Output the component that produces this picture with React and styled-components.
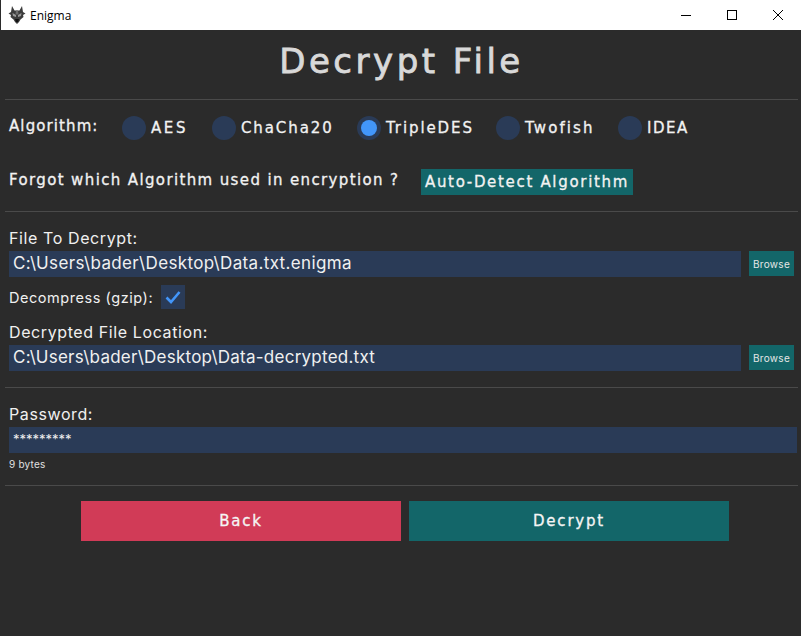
import React from 'react';
import styled, { createGlobalStyle } from 'styled-components';

const techFont = `"DejaVu Sans", sans-serif`;
const bodyFont = `Inter, "Open Sans", sans-serif`;

const GlobalStyle = createGlobalStyle`
html, body {
    margin: 0;
    padding: 0;
    background: #2b2b2b;
}
* {
    box-sizing: border-box;
}
`

const Window = styled.div`
width: 801px;
height: 636px;
overflow: hidden;
background: #2b2b2b;
padding-left: 1px;
`

const TitleBar = styled.div`
display: flex;
align-items: center;
height: 30px;
background: #fff;
`

const AppLogo = styled.svg`
width: 18px;
height: 18px;
margin-left: 7px;
`

const AppName = styled.span`
margin-left: 4px;
font-family: "Open Sans", sans-serif;
font-size: 12px;
color: #000;
flex: 1;
`

const WinButton = styled.div`
display: flex;
align-items: center;
justify-content: center;
width: 46px;
height: 30px;
svg {
    display: block;
}
`

const Content = styled.div`
padding: 0 3px 0 4px;
`

const Title = styled.h1`
display: flex;
align-items: center;
justify-content: center;
height: 69px;
margin: 0;
padding-bottom: 7px;
font-family: ${techFont};
font-size: 34px;
font-weight: 400;
letter-spacing: 3.5px;
-webkit-text-stroke: .8px #d9d9d9;
color: #d9d9d9;
`

const Divider = styled.div`
height: 1px;
background: #4a4a4a;
`

const Section = styled.div`
padding: ${p => p.$top}px 0 0 4px;
height: ${p => p.$height}px;
`

const AlgoRow = styled.div`
display: flex;
align-items: center;
height: 24px;
`

const AlgoLabel = styled.span`
width: 113px;
margin-top: -4px;
font-family: ${techFont};
font-size: 15px;
letter-spacing: 1.1px;
-webkit-text-stroke: .3px #f2f2f2;
color: #f2f2f2;
`

const RadioItem = styled.label`
display: flex;
align-items: center;
gap: 5px;
width: ${p => p.$width}px;
`

const RadioDot = styled.span`
display: flex;
align-items: center;
justify-content: center;
width: 24px;
height: 24px;
border-radius: 50%;
background: #2a3b57;
&::after {
    content: '';
    display: ${p => (p.$checked ? 'block' : 'none')};
    width: 16px;
    height: 16px;
    border-radius: 50%;
    background: #4296fa;
}
`

const RadioText = styled.span`
font-family: ${techFont};
font-size: 15px;
letter-spacing: ${p => p.$spacing}px;
-webkit-text-stroke: .3px #f2f2f2;
color: #f2f2f2;
`

const ForgotRow = styled.div`
display: flex;
align-items: flex-start;
margin-top: 29px;
`

const ForgotText = styled.span`
width: 412px;
margin-top: 2px;
font-family: ${techFont};
font-size: 15px;
letter-spacing: 1.37px;
-webkit-text-stroke: .3px #f2f2f2;
color: #f2f2f2;
white-space: nowrap;
`

const DetectButton = styled.div`
display: flex;
align-items: center;
justify-content: center;
width: 212px;
height: 26px;
background: #136669;
font-family: ${techFont};
font-size: 15px;
letter-spacing: 1.68px;
-webkit-text-stroke: .3px #f2f2f2;
color: #f2f2f2;
white-space: nowrap;
`

const FieldLabel = styled.div`
height: 20px;
font-family: ${bodyFont};
font-size: 16px;
line-height: 20px;
letter-spacing: .6px;
color: #f0f0f0;
`

const FieldRow = styled.div`
display: flex;
align-items: flex-start;
gap: 8px;
margin-top: ${p => p.$top || 0}px;
`

const PathInput = styled.div`
flex: ${p => (p.$full ? 'none' : 1)};
width: ${p => (p.$full ? '788px' : 'auto')};
height: 26px;
padding-left: 4px;
background: #2a3b57;
font-family: ${bodyFont};
font-size: 17px;
line-height: 25px;
letter-spacing: ${p => p.$spacing ?? .35}px;
color: #f0f0f0;
`

const MaskInput = styled(PathInput)`
font-size: 13px;
line-height: 24px;
letter-spacing: 0;
`

const BrowseButton = styled.div`
display: flex;
align-items: center;
justify-content: center;
width: 45px;
height: 25px;
margin-right: 4px;
background: #136669;
font-family: ${bodyFont};
font-size: 10px;
letter-spacing: .3px;
color: #e6e6e6;
`

const CheckRow = styled.div`
display: flex;
align-items: center;
gap: 8px;
height: 24px;
margin: 8px 0 13px;
`

const CheckLabel = styled.span`
font-family: ${bodyFont};
font-size: 14.5px;
letter-spacing: .55px;
color: #f0f0f0;
`

const CheckBox = styled.div`
display: flex;
align-items: center;
justify-content: center;
width: 24px;
height: 24px;
background: #2a3b57;
`

const Hint = styled.div`
margin-top: 5px;
font-family: ${bodyFont};
font-size: 10px;
letter-spacing: .2px;
color: #e0e0e0;
`

const ActionRow = styled.div`
display: flex;
gap: 8px;
padding: 15px 0 0 76px;
`

const ActionButton = styled.div`
display: flex;
align-items: center;
justify-content: center;
width: 320px;
height: 40px;
background: ${p => (p.$danger ? '#d13b57' : '#136669')};
font-family: ${techFont};
font-size: 15px;
letter-spacing: 1.8px;
-webkit-text-stroke: .3px #f5f5f5;
color: #f5f5f5;
`

const algorithms = [
    { name: 'AES', width: 90, spacing: 2.6 },
    { name: 'ChaCha20', width: 145, spacing: 1.9 },
    { name: 'TripleDES', width: 139, spacing: 1.9, checked: true },
    { name: 'Twofish', width: 122, spacing: 2.1 },
    { name: 'IDEA', width: 120, spacing: 1.5 },
];

const WolfLogo = () => (
    <AppLogo viewBox="0 0 18 18">
        <path fill="#3c3c3c" d="M4 0l2.5 4.5h5L14 0l1 6 2.5 1.5L15 9l.5 2-3 2.5L11 16l-2 2-2-2-1.500-2.500L2.500 11 3 9 .5 7.500 3 6z" />
        <path fill="#9a9a9a" d="M4.500 7l3.500 2v2L5 10zM13.500 7L10 9v2l3-1z" />
        <path fill="#111" d="M7 13h4l-1 3H8z" />
        <path fill="#6e6e6e" d="M8 4.500h2l.5 4h-3z" />
    </AppLogo>
);

const App = () => {
    return (
        <Window>
            <GlobalStyle />
            <TitleBar>
                <WolfLogo />
                <AppName>Enigma</AppName>
                <WinButton>
                    <svg width="10" height="10" viewBox="0 0 10 10"><path d="M0 5.500h10" stroke="#000" fill="none" /></svg>
                </WinButton>
                <WinButton>
                    <svg width="10" height="10" viewBox="0 0 10 10"><rect x=".5" y=".5" width="9" height="9" stroke="#000" fill="none" /></svg>
                </WinButton>
                <WinButton>
                    <svg width="10" height="10" viewBox="0 0 10 10"><path d="M0 0l10 10M10 0L0 10" stroke="#000" fill="none" /></svg>
                </WinButton>
            </TitleBar>
            <Content>
                <Title>Decrypt File</Title>
                <Divider />
                <Section $top={16} $height={111}>
                    <AlgoRow>
                        <AlgoLabel>Algorithm:</AlgoLabel>
                        {algorithms.map(a => (
                            <RadioItem key={a.name} $width={a.width}>
                                <RadioDot $checked={a.checked} />
                                <RadioText $spacing={a.spacing}>{a.name}</RadioText>
                            </RadioItem>
                        ))}
                    </AlgoRow>
                    <ForgotRow>
                        <ForgotText>Forgot which Algorithm used in encryption ?</ForgotText>
                        <DetectButton>Auto-Detect Algorithm</DetectButton>
                    </ForgotRow>
                </Section>
                <Divider />
                <Section $top={16} $height={175}>
                    <FieldLabel>File To Decrypt:</FieldLabel>
                    <FieldRow $top={3}>
                        <PathInput>C:\Users\bader\Desktop\Data.txt.enigma</PathInput>
                        <BrowseButton>Browse</BrowseButton>
                    </FieldRow>
                    <CheckRow>
                        <CheckLabel>Decompress (gzip):</CheckLabel>
                        <CheckBox>
                            <svg width="16" height="14" viewBox="0 0 16 14">
                                <path d="M1.500 7.500l4.500 4.500L14.500 2" stroke="#4296fa" strokeWidth="2.6" fill="none" />
                            </svg>
                        </CheckBox>
                    </CheckRow>
                    <FieldLabel>Decrypted File Location:</FieldLabel>
                    <FieldRow $top={3}>
                        <PathInput $spacing={.25}>C:\Users\bader\Desktop\Data-decrypted.txt</PathInput>
                        <BrowseButton>Browse</BrowseButton>
                    </FieldRow>
                </Section>
                <Divider />
                <Section $top={16} $height={97}>
                    <FieldLabel>Password:</FieldLabel>
                    <FieldRow $top={3}>
                        <MaskInput $full>*********</MaskInput>
                    </FieldRow>
                    <Hint>9 bytes</Hint>
                </Section>
                <Divider />
                <ActionRow>
                    <ActionButton $danger>Back</ActionButton>
                    <ActionButton>Decrypt</ActionButton>
                </ActionRow>
            </Content>
        </Window>
    )
}

export default App
